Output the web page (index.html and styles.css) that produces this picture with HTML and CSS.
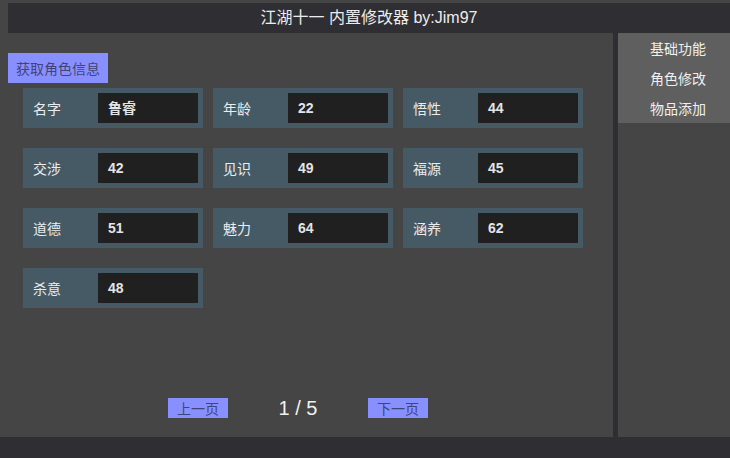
FILE: index.html
```html
<!DOCTYPE html>
<html lang="zh">
<head>
<meta charset="utf-8">
<title>江湖十一 内置修改器</title>
<link rel="stylesheet" href="styles.css">
</head>
<body>
<div class="app">
  <header class="titlebar">江湖十一 内置修改器 by:Jim97</header>
  <div class="body">
    <main class="main">
      <button class="btn fetch">获取角色信息</button>
      <div class="grid">
        <div class="field"><span class="label">名字</span><span class="value">鲁睿</span></div>
        <div class="field"><span class="label">年龄</span><span class="value">22</span></div>
        <div class="field"><span class="label">悟性</span><span class="value">44</span></div>
        <div class="field"><span class="label">交涉</span><span class="value">42</span></div>
        <div class="field"><span class="label">见识</span><span class="value">49</span></div>
        <div class="field"><span class="label">福源</span><span class="value">45</span></div>
        <div class="field"><span class="label">道德</span><span class="value">51</span></div>
        <div class="field"><span class="label">魅力</span><span class="value">64</span></div>
        <div class="field"><span class="label">涵养</span><span class="value">62</span></div>
        <div class="field"><span class="label">杀意</span><span class="value">48</span></div>
      </div>
      <div class="pager">
        <button class="btn page-btn">上一页</button>
        <span class="page-num">1 / 5</span>
        <button class="btn page-btn">下一页</button>
      </div>
    </main>
    <div class="divider"></div>
    <aside class="sidebar">
      <nav class="menu">
        <div class="menu-item">基础功能</div>
        <div class="menu-item">角色修改</div>
        <div class="menu-item">物品添加</div>
      </nav>
    </aside>
  </div>
  <footer class="bottombar"></footer>
</div>
</body>
</html>
```

FILE: styles.css
```css
* { box-sizing: border-box; }
html, body {
  margin: 0;
  padding: 0;
  background: #454545;
  width: 730px;
  height: 458px;
  overflow: hidden;
  font-family: "Liberation Sans", "Noto Sans CJK SC", sans-serif;
}
.app {
  display: flex;
  flex-direction: column;
  height: 458px;
}
.titlebar {
  margin: 3px 0 0 8px;
  height: 30px;
  background: #2f2e33;
  color: #ececec;
  font-size: 16px;
  line-height: 30px;
  text-align: center;
}
.body {
  display: flex;
  height: 404px;
}
.main {
  width: 613px;
  display: flex;
  flex-direction: column;
  align-items: flex-start;
  padding-top: 20px;
  padding-bottom: 19px;
}
.btn {
  border: none;
  margin: 0;
  padding: 0;
  background: #8890ff;
  color: #40447a;
  font-family: "Noto Sans CJK SC", sans-serif;
  font-size: 14px;
  cursor: pointer;
}
.fetch {
  margin-left: 8px;
  width: 100px;
  height: 30px;
  line-height: 30px;
}
.grid {
  margin: 5px 0 0 23px;
  display: grid;
  grid-template-columns: repeat(3, 180px);
  grid-auto-rows: 40px;
  column-gap: 10px;
  row-gap: 20px;
}
.field {
  background: #455a64;
  display: flex;
  align-items: center;
  padding: 5px 5px 5px 10px;
}
.label {
  width: 65px;
  color: #ececec;
  font-family: "Noto Sans CJK SC", sans-serif;
  font-size: 14px;
}
.value {
  flex: 1;
  height: 30px;
  background: #202020;
  color: #e4e4e4;
  font-weight: bold;
  font-size: 14px;
  line-height: 30px;
  padding-left: 10px;
  font-family: "Liberation Sans", "Noto Sans CJK SC", sans-serif;
}
.pager {
  margin-top: auto;
  margin-left: 168px;
  display: flex;
  align-items: center;
}
.page-btn {
  width: 60px;
  height: 20px;
  line-height: 20px;
}
.page-num {
  width: 140px;
  text-align: center;
  color: #f0f0f0;
  font-size: 20px;
  line-height: 20px;
}
.divider {
  width: 5px;
  background: #2f2e33;
}
.sidebar {
  flex: 1;
  background: #454545;
}
.menu {
  background: #5f5f5f;
}
.menu-item {
  height: 30px;
  line-height: 30px;
  padding-left: 8px;
  text-align: center;
  color: #f0f0f0;
  font-family: "Noto Sans CJK SC", sans-serif;
  font-size: 14px;
}
.bottombar {
  height: 21px;
  background: #2f2e33;
}
```
